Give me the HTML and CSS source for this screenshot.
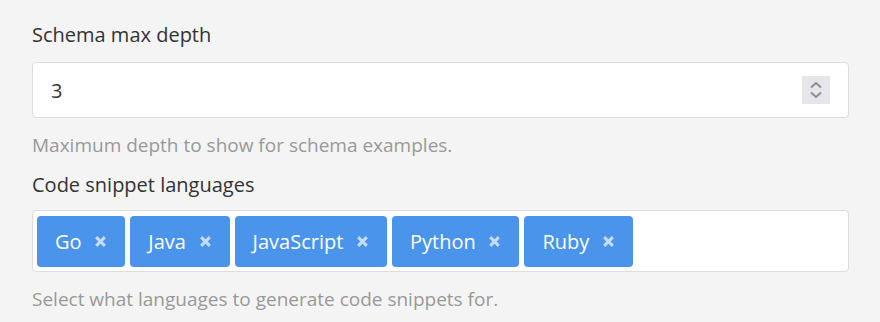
FILE: index.html
```html
<!DOCTYPE html>
<html lang="en">
<head>
    <meta charset="UTF-8">
    <meta name="viewport" content="width=device-width, initial-scale=1.0">
    <title>Settings</title>
    <link rel="stylesheet" href="styles.css">
</head>
<body>
    <div class="container">
        <div class="field">
            <label for="depth">Schema max depth</label>
            <div class="number">
                <input type="text" id="depth" value="3">
                <span class="spinner">
                    <svg width="14" height="20" viewBox="0 0 14 20">
                        <path d="M2 7.5 L7 3 L12 7.5" fill="none" stroke="#8a8a90" stroke-width="1.8"/>
                        <path d="M2 12.5 L7 17 L12 12.5" fill="none" stroke="#8a8a90" stroke-width="1.8"/>
                    </svg>
                </span>
            </div>
            <p class="help">Maximum depth to show for schema examples.</p>
        </div>

        <div class="field">
            <label>Code snippet languages</label>
            <div class="tags">
                <span class="tag">Go <svg class="x" viewBox="0 0 12 12"><path d="M2 2 L10 10 M10 2 L2 10"/></svg></span>
                <span class="tag">Java <svg class="x" viewBox="0 0 12 12"><path d="M2 2 L10 10 M10 2 L2 10"/></svg></span>
                <span class="tag">JavaScript <svg class="x" viewBox="0 0 12 12"><path d="M2 2 L10 10 M10 2 L2 10"/></svg></span>
                <span class="tag">Python <svg class="x" viewBox="0 0 12 12"><path d="M2 2 L10 10 M10 2 L2 10"/></svg></span>
                <span class="tag">Ruby <svg class="x" viewBox="0 0 12 12"><path d="M2 2 L10 10 M10 2 L2 10"/></svg></span>
            </div>
            <p class="help">Select what languages to generate code snippets for.</p>
        </div>
    </div>
</body>
</html>
```

FILE: styles.css
```css
body { margin: 0; background: #f4f4f4; font-family: "Open Sans", sans-serif; color: #333; }
.container { padding: 23px 31px 0 32px; }
.field { display: flex; flex-direction: column; }
label { font-size: 20px; line-height: 24px; margin: 0 0 15px; }
.field + .field label { margin: 16px 0 13px; }
.help { margin: 15px 0 0; font-size: 19px; color: #999; line-height: 24px; }
.number { display: flex; align-items: center; height: 54px; background: #fff; border: 1px solid #ddd; border-radius: 4px; padding: 0 18px; }
.number input { flex: 1; border: none; outline: none; font: inherit; font-size: 20px; color: #333; padding: 0; background: none; }
.spinner { display: flex; align-items: center; justify-content: center; width: 28px; height: 28px; background: #e6e6ea; }
.tags { display: flex; gap: 5px; height: 62px; background: #fff; border: 1px solid #ddd; border-radius: 4px; padding: 5px 4px 4px; box-sizing: border-box; }
.tag { display: flex; align-items: center; height: 51px; padding: 0 18px 0 18px; background: #4a94ec; color: #fff; border-radius: 4px; font-size: 20px; white-space: pre; }
.tag .x { width: 13px; height: 13px; margin-left: 7.5px; stroke: #c6dcf8; stroke-width: 2.8; fill: none; }
```
